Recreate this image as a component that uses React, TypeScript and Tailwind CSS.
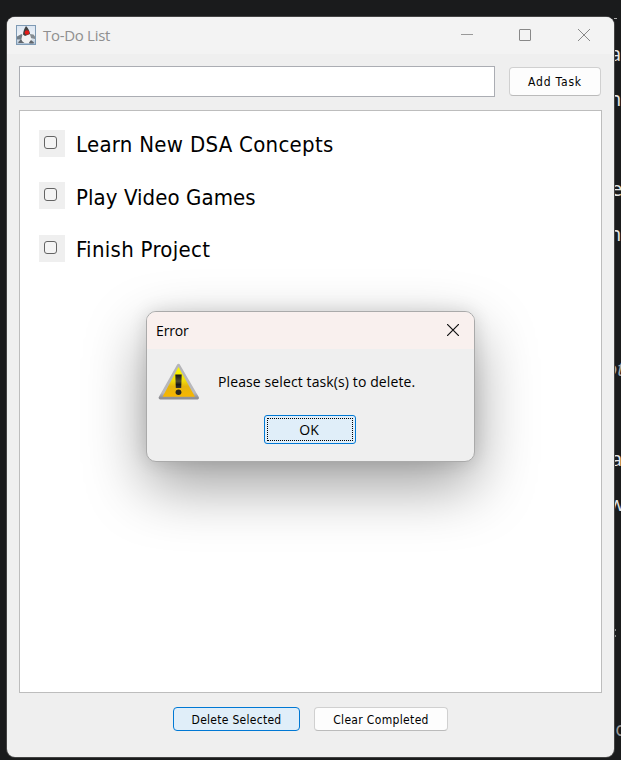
import React from "react";

const tahoma = "font-['DejaVu_Sans_Condensed','DejaVu_Sans',sans-serif] [font-stretch:condensed]";
const segoe = "font-['Open_Sans','Noto_Sans',sans-serif]";

const tasks = [
  { label: "Learn New DSA Concepts", row: "h-[52px]", text: "mt-px tracking-[0.29px]" },
  { label: "Play Video Games", row: "h-[53px]", text: "mt-[2px] tracking-[0.07px]" },
  { label: "Finish Project", row: "h-[52px]", text: "mt-px tracking-[0.3px]" },
];

function Backdrop() {
  const glyph = "absolute whitespace-nowrap leading-6 text-[20px]";
  return (
    <div className={`absolute inset-0 overflow-hidden text-[#e6e6e6] ${segoe}`}>
      <span className="absolute left-[614px] top-[18px] h-px w-[3px] bg-[#aaa]" />
      <span className={`${glyph} left-[610px] top-[42px]`}>a</span>
      <span className={`${glyph} left-[609px] top-[87px]`}>n</span>
      <span className={`${glyph} left-[611px] top-[177px]`}>e</span>
      <span className={`${glyph} left-[609px] top-[222px]`}>n</span>
      <span className={`${glyph} left-[606px] top-[357px] italic text-[#aaa]`}>ot</span>
      <span className={`${glyph} left-[611px] top-[447px]`}>a</span>
      <span className={`${glyph} left-[609px] top-[492px]`}>w</span>
      <span className="absolute left-[614px] top-[629px] h-[2px] w-[2px] bg-[#888]" />
      <span className="absolute left-[614px] top-[635px] h-[2px] w-[2px] bg-[#888]" />
      <span className={`${glyph} left-[603px] top-[717px] text-[#999]`}>uc</span>
    </div>
  );
}

function JavaIcon() {
  return (
    <svg className="mb-[2px]" width="20" height="20" viewBox="0 0 20 20">
      <defs>
        <linearGradient id="tile" x1="0" y1="0" x2="0" y2="1">
          <stop offset="0" stopColor="#dce6f2" />
          <stop offset=".6" stopColor="#eef3f8" />
          <stop offset="1" stopColor="#a9bdd1" />
        </linearGradient>
      </defs>
      <rect x=".5" y=".5" width="19" height="19" fill="url(#tile)" stroke="#7e9ab4" />
      <path d="M1 11.500L5.500 9 8 11l-2 3.500H1z" fill="#737e87" />
      <path d="M13.500 9l4 .5 1.500 2v2.500l-4.500-1z" fill="#858c91" />
      <path d="M6.500 9.500h7.500l2 7-2.500 1.500h-6.500L5 16z" fill="#f2f2f2" />
      <path d="M10 1C8.300 3.500 7.200 6.500 7 9.500l2 1.500 5-2C13.700 6 12.200 3 10 1z" fill="#404040" />
      <path d="M2 17.500l3-3.500 1.500 2.500 2 1.500H3zM13 17.500l2-2.500 3 2.500-.5 1h-4z" fill="#62676c" />
      <ellipse cx="11" cy="7.500" rx="2.300" ry="2.200" fill="#e51b18" />
    </svg>
  );
}

function WarningIcon() {
  return (
    <svg width="42" height="38" viewBox="0 0 42 38">
      <defs>
        <linearGradient id="rim" x1="0" y1="0" x2="0" y2="1">
          <stop offset="0" stopColor="#b5b5b8" />
          <stop offset=".85" stopColor="#b9b9bd" />
          <stop offset="1" stopColor="#8f8f94" />
        </linearGradient>
        <linearGradient id="sign" x1="0" y1="0" x2="0" y2="1">
          <stop offset="0" stopColor="#fcfa00" />
          <stop offset=".45" stopColor="#f3e008" />
          <stop offset=".65" stopColor="#e5b40c" />
          <stop offset="1" stopColor="#f8b600" />
        </linearGradient>
        <linearGradient id="mark" x1="0" y1="0" x2="0" y2="1">
          <stop offset="0" stopColor="#151515" />
          <stop offset=".5" stopColor="#504c30" />
          <stop offset=".75" stopColor="#171717" />
          <stop offset="1" stopColor="#333" />
        </linearGradient>
      </defs>
      <path d="M20.500 2.500L39.300 34.800H2.300z" fill="url(#rim)" stroke="url(#rim)" strokeWidth="3.400" strokeLinejoin="round" />
      <path d="M20.500 4L37 33.800H4.600z" fill="url(#sign)" />
      <path d="M17.300 11.500h6.400l-.5 13.500h-5.400z" fill="url(#mark)" />
      <ellipse cx="20.500" cy="29.300" rx="2.900" ry="2.700" fill="#292820" />
    </svg>
  );
}

function ErrorDialog() {
  return (
    <section className="absolute left-[146px] top-[311px] flex h-[151px] w-[329px] flex-col overflow-hidden rounded-[10px] border border-[#aaa] bg-[#efefef] text-black shadow-[0_24px_60px_0_rgba(0,0,0,0.38),0_0_18px_0_rgba(0,0,0,0.12)]">
      <header className={`flex h-[37px] shrink-0 items-center justify-between bg-[#f9f0ee] pl-[9px] pr-[15px] text-[14px] ${segoe}`}>
        <span className="tracking-[-0.15px]">Error</span>
        <svg className="mb-[2px]" width="12" height="12" viewBox="0 0 12 12" stroke="#111" strokeWidth="1.200"><path d="M0 0l12 12M12 0L0 12" /></svg>
      </header>
      <div className={`flex h-[66px] shrink-0 pl-[11px] pt-[14px] text-[14px] ${segoe}`}>
        <WarningIcon />
        <span className="ml-[18px] mt-[9px] whitespace-nowrap leading-5 tracking-[0.11px]">Please select task(s) to delete.</span>
      </div>
      <button className={`ml-[117px] h-[29px] w-[92px] shrink-0 rounded-[3px] border border-[#0078d4] bg-[#e0eef9] p-[2px] text-[14px] leading-5 ${segoe}`}>
        <span className="flex h-full items-center justify-center border border-dotted border-black pr-[2px]">OK</span>
      </button>
    </section>
  );
}

export default function App() {
  return (
    <main className="relative h-[760px] w-[621px] overflow-hidden bg-[#1a1b1c]">
      <Backdrop />
      <section className="absolute left-[7px] top-[17px] flex h-[740px] w-[607px] flex-col overflow-hidden rounded-[8px] bg-[#efefef] text-black shadow-[0_0_0_1px_#444]">
        <header className={`flex h-[37px] shrink-0 items-center bg-[#f3f3f3] pl-[9px] pr-[24px] text-[#8f8f8f] ${segoe}`}>
          <JavaIcon />
          <span className="ml-[7px] grow text-[15px] tracking-[-0.3px]">To-Do List</span>
          <div className="mb-[2px] flex items-center">
            <span className="mr-[46px] h-px w-3 bg-[#999]" />
            <span className="mr-[47px] h-3 w-3 rounded-[1px] border border-[#888]" />
            <svg width="12" height="12" viewBox="0 0 12 12" stroke="#888"><path d="M0 0l12 12M12 0L0 12" /></svg>
          </div>
        </header>
        <div className="flex h-[56px] shrink-0 gap-[14px] pl-3 pt-3">
          <input aria-label="New task" className="h-[31px] w-[476px] border border-[#abadb3] bg-white outline-none" />
          <button className={`mt-px h-[29px] w-[92px] rounded-[4px] border border-[#d0d0d0] border-b-[#bbb] bg-[#fdfdfd] text-[12px] tracking-[0.8px] ${tahoma}`}>Add Task</button>
        </div>
        <ul className="mx-3 h-[583px] shrink-0 border border-[#bdbdbd] bg-white pl-[19px] pt-[19px]">
          {tasks.map((task) => (
            <li key={task.label} className={`flex items-start ${task.row}`}>
              <span className="flex h-[27px] w-[26px] justify-center bg-[#efefef] pr-[3px] pt-[6px]">
                <span className="h-[13px] w-[13px] rounded-[3px] border border-[#646464] bg-[#f4f4f4]" />
              </span>
              <span className={`ml-[11px] whitespace-nowrap text-[22px] leading-[28px] ${task.text} ${tahoma}`}>{task.label}</span>
            </li>
          ))}
        </ul>
        <footer className={`flex gap-[14px] pl-[166px] pt-[14px] text-[12px] ${tahoma}`}>
          <button className="h-6 w-[127px] rounded-[4px] border border-[#0078d4] bg-[#e0eef9] pt-px tracking-[0.28px]">Delete Selected</button>
          <button className="h-6 w-[134px] rounded-[4px] border border-[#d0d0d0] border-b-[#bbb] bg-[#fdfdfd] pt-px tracking-[0.34px]">Clear Completed</button>
        </footer>
      </section>
      <ErrorDialog />
    </main>
  );
}
